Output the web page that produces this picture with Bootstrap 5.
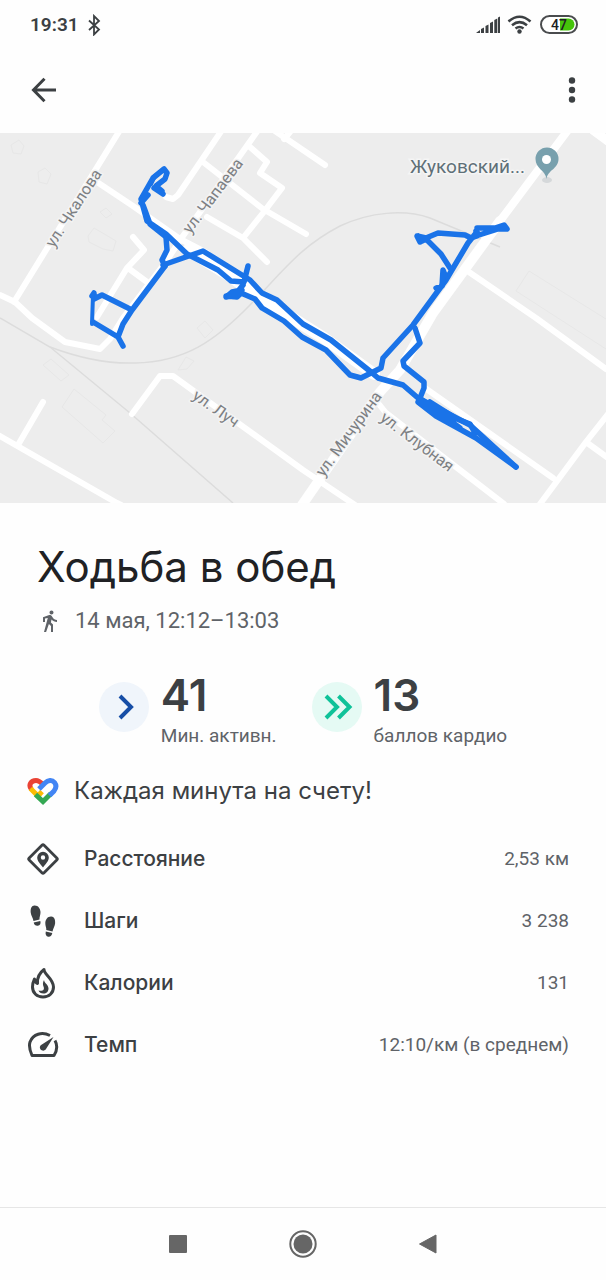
<!DOCTYPE html>
<html lang="ru">
<head>
<meta charset="utf-8">
<meta name="viewport" content="width=device-width, initial-scale=1">
<title>Ходьба в обед</title>
<link href="https://cdn.jsdelivr.net/npm/bootstrap@5.3.0/dist/css/bootstrap.min.css" rel="stylesheet">
<style>
  body { font-family: Roboto, "Noto Sans", sans-serif; color: #3c4043; background: #fefefe; }
  .ink-soft { color: #5f6368; }
  .display-face { font-family: Inter, Roboto, sans-serif; }
  .status { height: 50px; padding: 0 26px 0 30px; font-size: 19px; font-weight: 600; }
  .appbar { height: 83px; padding: 0 10px 4px 19px; }
  .icon-btn { width: 48px; height: 48px; padding: 0; border: 0; display: flex; align-items: center; justify-content: center; }
  .map { display: block; width: 100%; height: auto; background: #ededed; }
  .street { font-size: 16px; fill: #7d8083; stroke: #f3f3f3; stroke-width: 3px; paint-order: stroke; text-anchor: middle; }
  .place { font-size: 19px; fill: #5f7078; stroke: #f5f5f5; stroke-width: 3px; paint-order: stroke; text-anchor: end; }
  .title { font-size: 42px; line-height: 52px; color: #202124; padding: 38px 37px 0; }
  .when { font-size: 22px; line-height: 28px; padding: 14px 38px 0; gap: 15px; }
  .stats { gap: 35px; padding-top: 32px; }
  .stat { gap: 12px; }
  .disc { width: 50px; height: 50px; margin-top: 15px; }
  .disc-blue { background: #f0f5fb; }
  .disc-green { background: #e5faf4; }
  .figure-num { font-size: 44px; line-height: 56px; font-weight: 600; }
  .caption-sm { font-size: 19px; line-height: 26px; }
  .cheer { font-size: 24px; line-height: 32px; padding: 26px 27px 0; gap: 15px; }
  .facts { padding: 21px 37px 0 27px; }
  .fact { height: 62px; gap: 25px; }
  .fact dt { font-size: 21px; font-weight: 500; }
  .fact dd { font-size: 19px; }
  .sysbar { height: 73px; border-top: 1px solid #e6e6e6; gap: 77px; }
</style>
</head>
<body>
<div class="d-flex flex-column min-vh-100">
  <div class="status d-flex align-items-center justify-content-between">
    <div class="d-flex align-items-center gap-2">
      <span>19:31</span>
      <svg width="14" height="22" viewBox="0 0 14 22" fill="none" stroke="#3c4043" stroke-width="1.800" aria-hidden="true"><path d="M2 6.500l10 9-5 5V2l5 5-10 9"/></svg>
    </div>
    <div class="d-flex align-items-center">
      <svg width="104" height="22" viewBox="0 0 104 22" aria-label="Сеть, Wi-Fi, заряд 47">
        <g fill="#3c4043"><path d="M0 19l4-3v3zM5 15l3-1.500V19H5zM9.500 12l3-1.500V19h-3zM14 9l3-1.500V19h-3zM18.300 6l3-1.500V19h-3z"/><path d="M22 3.500l2-1V19h-2z"/><circle cx="43.500" cy="17.500" r="2.200"/></g>
        <g fill="none" stroke="#3c4043" stroke-width="2.600"><path d="M32.500 7.500q11-9.500 22 0M36 11.200q7.500-6 15 0M39.500 14.500q4-3 8 0"/></g>
        <rect x="65" y="2" width="36" height="17" rx="8.500" fill="#fff" stroke="#4a4c4e" stroke-width="2"/>
        <path d="M84 4.500h8.500a6 6 0 0 1 0 12H84z" fill="#45c40a"/>
        <text x="83" y="15.500" text-anchor="middle" font-size="14" font-weight="500" fill="#202124">47</text>
      </svg>
    </div>
  </div>

  <header class="appbar d-flex align-items-center justify-content-between">
    <button type="button" class="btn icon-btn" aria-label="Назад">
      <svg width="28" height="28" viewBox="0 0 28 28" fill="none" stroke="#3c4043" stroke-width="3"><path d="M27 14H4.500M15.500 2.800L4.500 14l11 11.200"/></svg>
    </button>
    <button type="button" class="btn icon-btn" aria-label="Ещё">
      <svg width="8" height="28" viewBox="0 0 8 28" fill="#3c4043"><circle cx="4" cy="4.500" r="3.200"/><circle cx="4" cy="14" r="3.200"/><circle cx="4" cy="23.500" r="3.200"/></svg>
    </button>
  </header>

  <main class="flex-grow-1">
    <svg class="map" viewBox="0 133 606 370" role="img" aria-label="Карта маршрута">
      <!-- buildings -->
      <g fill="none" stroke="#e7e7e7" stroke-width="1">
        <path d="M11 145l8-5 5 6-3 8-8-1zM38 172l7-4 6 6-4 10-8-2zM88 236l6-8 12 7 10 6-3 10-10-2-14-7zM100 212l6-4 6 6-6 4zM74 389l32 26-4 5 13 11-12 12-41-36zM178 370l8-13 8 4-7 8zM197 328l8-7 8 9-8 8zM43 365l8-6 18 16-8 6zM529 271l77 48M529 271l-13 20 90 58"/>
      </g>
      <!-- railway -->
      <g fill="none" stroke="#dcdcdc" stroke-width="1.500">
        <path d="M0 318l50 29 80 66 103 90"/>
        <path d="M50 347C82 359 110 364 135 363c50-1 80-22 115-58 35-36 50-58 90-79 30-14 64-17 90-8l70 29"/>
      </g>
      <!-- streets -->
      <g fill="none" stroke="#fff" stroke-width="6" stroke-linecap="round" stroke-linejoin="round">
        <path d="M120 130L14 302M0 295l15 7 17 16 33 24 35 7 10-10 13-21 42-55 18-27 78-110M97 182l36 24 47 33 27 14"/>
        <path d="M222 130l-44 65-5 4-7-2M203 162l60 47 43 25M250 147l17 15-7 11 22 15-19 25-20 25M207 217l36 21 24 24M275 131l50 34M284 139l6-7M133 237l11 13-17 18-30 49M128 268l19 14"/>
        <path d="M466 270l70 48 70 51M425 388l128 90M374 398l12 15 118 91M540 504l46-62 22-28M586 442l22 16M0 436l117 67 4 2M18 445l25-43M132 414l28-38h13l130 94 52 35"/>
        <path d="M593 130l15 11" stroke-width="9"/>
        <path d="M188 250l42 26 34 24 60 38 50 36" stroke-width="12"/>
        <path d="M568 130l-68 91" stroke-width="8"/>
        <path d="M500 221l-67 92-33 57-20 22-78 113" stroke-width="10"/>
      </g>
      <!-- street names -->
      <text class="street" transform="translate(78 211) rotate(-57)">ул. Чкалова</text>
      <text class="street" transform="translate(217 199) rotate(-53)">ул. Чапаева</text>
      <text class="street" transform="translate(213 413) rotate(35)">ул. Луч</text>
      <text class="street" transform="translate(353 437) rotate(-54)">ул. Мичурина</text>
      <text class="street" transform="translate(414 446) rotate(37)">ул. Клубная</text>
      <text class="place" x="525" y="173">Жуковский...</text>
      <ellipse cx="547" cy="180" rx="5" ry="3" fill="#d5d8da"/>
      <path d="M546.500 179c-1-9-11-10-11-20a11.500 11.500 0 0 1 23 0c0 10-11 11-12 20z" fill="#78a0ad"/>
      <circle cx="546.500" cy="159.500" r="4.500" fill="#fff"/>
      <!-- walked route -->
      <g fill="none" stroke="#1a73e8" stroke-width="5.500" stroke-linecap="round" stroke-linejoin="round">
        <path d="M163 194l-9-6M162 191l-6-5 9-7 2-6-3-4-11 9-12 21 6 22 19 13 21 20 31 16 13 11 13 1 4-16M141 203l7-8M143 205l7 19 15 12"/>
        <path d="M151 184l4-8 7-5" stroke-width="4"/>
        <path d="M243 285l-8 10-9 2 6-5 10-2M226 296l11 1 4-4 14 6 7 9 22 13 18 16 24 13 24 25 11 3 20-10 2-10 30-33 33-45 22-37 8-10"/>
        <path d="M166 237l1 13-5 10 3 6M163 265l20-7 20-7 47 29 12 13 15 7 26 24 28 16 40 32 7 6 25 7 15 13 52 27 46 42"/>
        <path d="M415 328l5 15-17 18 1 5 20 16v6l-4 10-2 4 18 14 40 22 40 29M430 402l27 17 13 5 5 9M422 400l38 28"/>
        <path d="M477 236l-6 2-6-3-27-2-12 5-9-2 3 6 6-3 15 15 9 14M418 236l4 5M477 228h18l9-3 3 4-9 0-19 6-3-4M436 288l6-2 1-16 2 5"/>
        <path d="M165 266l-33 44-9 14-5 13 5 9M118 337l-25-15M92 296l2-3v6l8-4 30 15"/>
        <path d="M93 295l-1 29" stroke-width="4"/>
      </g>
    </svg>

    <h1 class="title display-face fw-normal mb-0">Ходьба в обед</h1>
    <div class="when ink-soft d-flex align-items-center">
      <svg width="22" height="24" viewBox="0 0 22 24" fill="#5f6368" aria-hidden="true"><path d="M13.500 5.500c1.100 0 2-.9 2-2s-.9-2-2-2-2 .9-2 2 .9 2 2 2zM9.800 8.900L6 23h2.100l2.800-8 2.100 2v6h2v-7.500l-2.100-2 .6-3C14.800 12 16.800 13 19 13v-2c-1.900 0-3.500-1-4.300-2.400l-1-1.600c-.4-.6-1-1-1.700-1-.3 0-.5.1-.8.1L5 8.300V13h2V9.600l2.800-.7"/></svg>
      <span>14 мая, 12:12–13:03</span>
    </div>

    <div class="stats d-flex justify-content-center">
      <div class="stat d-flex">
        <div class="disc disc-blue rounded-circle d-flex align-items-center justify-content-center">
          <svg width="50" height="50" viewBox="0 0 50 50" fill="none" stroke="#174ea6" stroke-width="4"><path d="M21 14l11 11-11 11"/></svg>
        </div>
        <div>
          <div class="figure-num display-face">41</div>
          <div class="caption-sm ink-soft">Мин. активн.</div>
        </div>
      </div>
      <div class="stat d-flex">
        <div class="disc disc-green rounded-circle d-flex align-items-center justify-content-center">
          <svg width="50" height="50" viewBox="0 0 50 50" fill="none" stroke="#0fc299" stroke-width="4"><path d="M14 14l11 11-11 11M26.500 14l11 11-11 11"/></svg>
        </div>
        <div>
          <div class="figure-num display-face">13</div>
          <div class="caption-sm ink-soft">баллов кардио</div>
        </div>
      </div>
    </div>

    <div class="cheer display-face d-flex align-items-center">
      <svg width="32" height="28" viewBox="0 0 32 28" fill="none" stroke-width="5" aria-hidden="true">
        <path d="M4.500 12.500C1 8 4 3.500 9 3.500c3 0 4.500 1.500 7 4" stroke="#ea4335"/>
        <path d="M3.500 11.500L11 19l4-4.500" stroke="#fbbc04"/>
        <path d="M8.500 17.500L16 24.500l8-8" stroke="#34a853"/>
        <path d="M12 12L18 6c3-3 7-3.500 9.500-.500 2.300 3 1.500 6-.5 8.500l-4.500 4.500" stroke="#4285f4"/>
      </svg>
      <span>Каждая минута на счету!</span>
    </div>

    <dl class="facts mb-0">
      <div class="fact d-flex align-items-center">
        <svg width="32" height="32" viewBox="0 0 32 32" aria-hidden="true"><rect x="5.500" y="5.500" width="21" height="21" rx="1.500" transform="rotate(45 16 16)" fill="none" stroke="#3c4043" stroke-width="2.800"/><path fill="#3c4043" fill-rule="evenodd" d="M16 24.500c-3-4-5.800-6.500-5.800-10a5.800 5.800 0 0 1 11.600 0c0 3.500-2.800 6-5.800 10zM16 12.300a2.200 2.200 0 1 0 0 4.400 2.200 2.200 0 0 0 0-4.400z"/></svg>
        <dt class="display-face">Расстояние</dt><dd class="ink-soft ms-auto mb-0">2,53 км</dd>
      </div>
      <div class="fact d-flex align-items-center">
        <svg width="32" height="32" viewBox="0 0 32 32" fill="#3c4043" aria-hidden="true"><path d="M7.500.500c3.500-.2 5.800 2.800 6 6.500.1 3-1.200 5-1 7.500L6.500 16C6 13 4 10.500 3.700 7.500 3.400 3.500 4.500.7 7.500.500zM6.700 17.500l6.600-1.500c.8 2.500-.2 4.600-2.500 4.800-2.200.2-3.600-1-4.100-3.300z"/><path d="M24.300 11.500c-3.600-.2-5.800 2.800-6 6.500-.1 3 1.200 4.500 1 7l6.200 1.500c.5-3 2.300-5 2.600-8 .4-4-1-6.800-3.800-7zM18.800 26.500l6.500 1.500c-.4 2.600-2 4-4 3.700-2.200-.3-3.200-2.300-2.500-5.200z"/></svg>
        <dt class="display-face">Шаги</dt><dd class="ink-soft ms-auto mb-0">3 238</dd>
      </div>
      <div class="fact d-flex align-items-center">
        <svg width="32" height="32" viewBox="0 0 32 32" fill="none" stroke="#3c4043" stroke-width="3" stroke-linejoin="round" aria-hidden="true"><path d="M17 2.500c0 5 9.500 9 9.500 17.500 0 6-4.500 10-10.500 10S5.500 26 5.500 20c0-3.500.8-5.500 2-8 .5 2.500 1 4 3 4.500C10 10.500 13 5.500 17 2.500z"/><path fill="#3c4043" stroke="none" d="M17 13c.5 3.500 4.500 4.500 4.500 8.500 0 3-2 5-5 5-2.500 0-4.500-1-5-3 4 1 6.500-.5 5-4-.8-2-.8-4 .5-6.500z"/></svg>
        <dt class="display-face">Калории</dt><dd class="ink-soft ms-auto mb-0">131</dd>
      </div>
      <div class="fact d-flex align-items-center">
        <svg width="32" height="32" viewBox="0 0 32 32" fill="none" stroke="#3c4043" stroke-width="3" stroke-linejoin="round" stroke-linecap="round" aria-hidden="true"><path stroke-linecap="butt" d="M23 6.500C15 2.500 6 5 3 13c-1.600 5 0 9 2 13.500h22c2.500-4 4-9.500 1-15"/><path fill="#3c4043" stroke="none" d="M26.500 8L18.700 20.500c-2.200 2.700-6.700.2-5.700-3 .3-1 .8-1.300 1.500-1.800z"/></svg>
        <dt class="display-face">Темп</dt><dd class="ink-soft ms-auto mb-0">12:10/км (в среднем)</dd>
      </div>
    </dl>
  </main>

  <nav class="sysbar d-flex align-items-center justify-content-center" aria-label="Система">
    <button type="button" class="btn icon-btn" aria-label="Недавние"><svg width="18" height="18" viewBox="0 0 18 18"><rect width="18" height="18" rx="1" fill="#666"/></svg></button>
    <button type="button" class="btn icon-btn" aria-label="Домой"><svg width="28" height="28" viewBox="0 0 28 28"><circle cx="14" cy="14" r="12.700" fill="none" stroke="#666" stroke-width="2"/><circle cx="14" cy="14" r="9.500" fill="#666"/></svg></button>
    <button type="button" class="btn icon-btn" aria-label="Назад (система)"><svg width="18" height="20" viewBox="0 0 18 20"><path d="M.500 10L17 1v18z" fill="#666" stroke="#666" stroke-linejoin="round"/></svg></button>
  </nav>
</div>
<script src="https://cdn.jsdelivr.net/npm/bootstrap@5.3.0/dist/js/bootstrap.bundle.min.js"></script>
</body>
</html>
